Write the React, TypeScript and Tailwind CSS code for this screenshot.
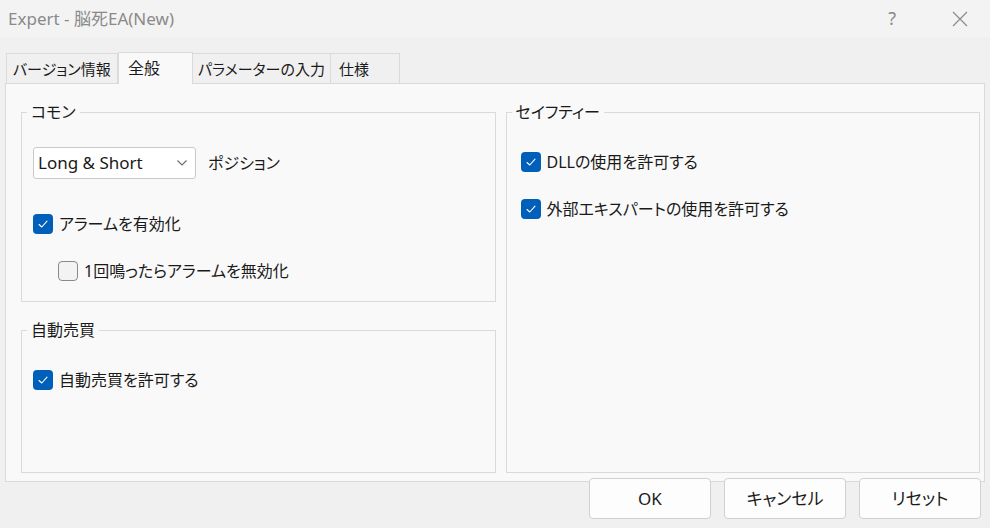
import { ReactNode } from 'react'

function Check({ checked }: { checked: boolean }) {
  if (!checked) {
    return <span className="w-5 h-5 rounded-[4px] border border-[#8a8a8a] bg-[#f3f3f3] shrink-0" />
  }
  return (
    <span className="w-5 h-5 rounded-[4px] bg-[#005fb8] shrink-0 flex items-center justify-center">
      <svg width="12" height="12" viewBox="0 0 12 12" fill="none">
        <polyline points="2,6.5 4.8,9 10,3.2" stroke="#ffffff" strokeWidth="1.1" strokeLinecap="round" strokeLinejoin="round" />
      </svg>
    </span>
  )
}

function CheckRow({ checked, label, className = '' }: { checked: boolean; label: string; className?: string }) {
  return (
    <div className={`flex items-center gap-[6px] h-5 ${className}`}>
      <Check checked={checked} />
      <span className="text-[16px] leading-5 text-[#1a1a1a] whitespace-nowrap">{label}</span>
    </div>
  )
}

function Group({ title, className = '', children }: { title: string; className?: string; children: ReactNode }) {
  return (
    <fieldset className={`border border-[#dadada] ${className}`}>
      <legend className="ml-[5px] px-[4px] text-[16px] leading-5 text-[#1a1a1a]">{title}</legend>
      {children}
    </fieldset>
  )
}

const tabs = [
  { label: 'バージョン情報', w: 'w-[112px]', pl: 'pl-[6px]' },
  { label: '全般', w: 'w-[75px]', pl: 'pl-[9px]', active: true },
  { label: 'パラメーターの入力', w: 'w-[139px]', pl: 'pl-[5px]' },
  { label: '仕様', w: 'w-[70px]', pl: 'pl-[8px]' },
]

export default function App() {
  return (
    <div className="w-[990px] h-[528px] bg-[#f0f0f0] flex flex-col overflow-hidden font-['Noto_Sans','Noto_Sans_CJK_JP',sans-serif] [font-feature-settings:'palt']">
      {/* Title bar */}
      <div className="h-[37px] bg-[#f3f3f3] flex items-center pl-[8px] shrink-0">
        <span className="text-[17px] text-[#8a8a8a] whitespace-nowrap">Expert - 脳死EA(New)</span>
        <div className="ml-auto flex items-center">
          <span className="text-[18px] text-[#8a8a8a] mr-[56px]">?</span>
          <svg width="16" height="16" viewBox="0 0 16 16" className="mr-[22px]">
            <path d="M1 1 L15 15 M15 1 L1 15" stroke="#8a8a8a" strokeWidth="1.2" />
          </svg>
        </div>
      </div>

      {/* Tabs */}
      <div className="flex items-end ml-[6px] mt-[14px] h-[32px] shrink-0">
        {tabs.map((t) =>
          t.active ? (
            <div
              key={t.label}
              className={`${t.w} ${t.pl} h-[32px] -mb-px relative z-10 bg-[#f9f9f9] border-t border-x border-[#dadada] text-[16px] leading-[30px] text-[#1a1a1a] whitespace-nowrap`}
            >
              {t.label}
            </div>
          ) : (
            <div
              key={t.label}
              className={`${t.w} ${t.pl} h-[30px] bg-[#f0f0f0] border-t border-x border-[#dadada] -ml-px first:ml-0 text-[15px] leading-[30px] text-[#1a1a1a] whitespace-nowrap`}
            >
              {t.label}
            </div>
          )
        )}
      </div>

      {/* Panel */}
      <div className="mx-[5px] h-[399px] border border-[#dadada] bg-[#f9f9f9] shrink-0 pt-[18px] pl-[15px] pr-[4px] flex gap-[10px]">
        <div className="w-[475px] flex flex-col gap-[18px]">
          <Group title="コモン" className="h-[200px]">
            <div className="pl-[11px] pt-[25px]">
              <div className="flex items-center gap-[12px]">
                <div className="w-[163px] h-[32px] bg-white border border-[#c9c9c9] rounded-[3px] flex items-center pl-[4px] pr-[7px]">
                  <span className="text-[17px] text-[#1a1a1a] whitespace-nowrap">Long &amp; Short</span>
                  <svg width="12" height="8" viewBox="0 0 12 8" className="ml-auto">
                    <polyline points="1.5,1.5 6,6 10.5,1.5" fill="none" stroke="#6a6a6a" strokeWidth="1.1" />
                  </svg>
                </div>
                <span className="text-[16px] text-[#1a1a1a] whitespace-nowrap">ポジション</span>
              </div>
              <CheckRow checked label="アラームを有効化" className="mt-[35px]" />
              <CheckRow checked={false} label="1回鳴ったらアラームを無効化" className="mt-[27px] ml-[25px]" />
            </div>
          </Group>
          <Group title="自動売買" className="h-[153px]">
            <div className="pl-[11px] pt-[30px]">
              <CheckRow checked label="自動売買を許可する" />
            </div>
          </Group>
        </div>
        <Group title="セイフティー" className="w-[475px] h-[371px]">
          <div className="pl-[14px] pt-[30px]">
            <CheckRow checked label="DLLの使用を許可する" />
            <CheckRow checked label="外部エキスパートの使用を許可する" className="mt-[27px]" />
          </div>
        </Group>
      </div>

      {/* Buttons */}
      <div className="flex justify-end gap-[13px] pr-[9px] -mt-[4px] relative z-10">
        {['OK', 'キャンセル', 'リセット'].map((b) => (
          <button
            key={b}
            className="w-[122px] h-[41px] bg-[#fdfdfd] border border-[#d0d0d0] rounded-[4px] text-[17px] text-[#1a1a1a]"
          >
            {b}
          </button>
        ))}
      </div>
    </div>
  )
}
